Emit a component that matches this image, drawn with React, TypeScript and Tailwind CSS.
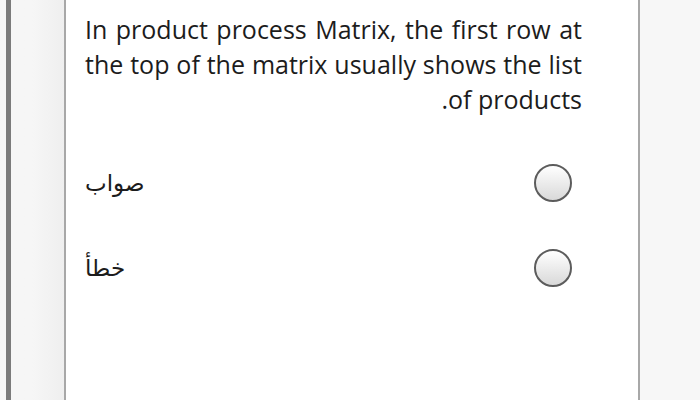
export default function App() {
  const options = ['صواب', 'خطأ']
  return (
    <div className="w-[700px] h-[403px] bg-white overflow-hidden">
      <div className="flex h-[400px] bg-[#f6f6f6]">
        <div className="w-[64px] h-full pl-[6px] bg-gradient-to-r from-[#f6f6f6] via-[#f6f6f6] to-[#efefef]">
          <div className="w-[5px] h-full bg-[#7b7b7b]" />
        </div>
        <div className="w-[576px] h-full bg-white border-l-2 border-r-2 border-[#a8a8a8] pl-[19px] pr-[56px] pt-[12px]">
          <p
            dir="rtl"
            className="text-justify text-[25px] leading-[35px] text-[#1c1c1c] font-['Open_Sans',sans-serif]"
          >
            In product process Matrix, the first row at the top of the matrix usually shows the list of products.
          </p>
          <div className="mt-[47px] flex flex-col gap-[47px] pr-[10px]">
            {options.map((o) => (
              <div key={o} className="flex items-center justify-between h-[38px]">
                <span className="text-[23px] text-[#1c1c1c] font-['DejaVu_Sans',sans-serif]">{o}</span>
                <span className="w-[38px] h-[38px] rounded-full border-2 border-[#5c5c5c] bg-gradient-to-b from-white to-[#d9d9d9]" />
              </div>
            ))}
          </div>
        </div>
        <div className="flex-1 h-full bg-[#f7f7f7]" />
      </div>
    </div>
  )
}
